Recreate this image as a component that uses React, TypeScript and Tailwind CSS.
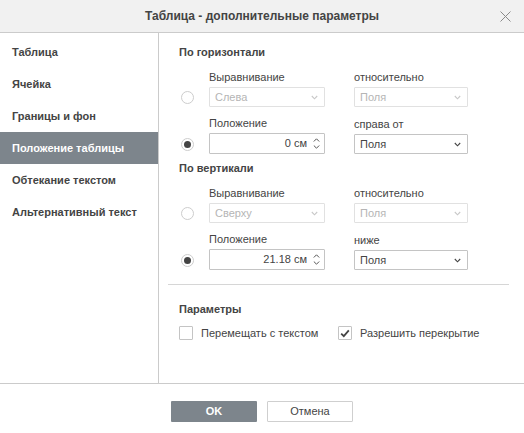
import React from 'react';

const font = { fontFamily: '"Liberation Sans", Arial, sans-serif' };

const navItems = [
  'Таблица',
  'Ячейка',
  'Границы и фон',
  'Положение таблицы',
  'Обтекание текстом',
  'Альтернативный текст',
];

const Chevron: React.FC<{ disabled?: boolean }> = ({ disabled }) => (
  <svg width="7" height="5" viewBox="0 0 7 5" className="shrink-0">
    <path d="M0.8 1 L3.5 3.8 L6.2 1" fill="none" stroke={disabled ? '#c8c8c8' : '#444'} strokeWidth="1.1" />
  </svg>
);

const Select: React.FC<{ value: string; disabled?: boolean; width: string }> = ({ value, disabled, width }) => (
  <div
    className={`${width} h-[20px] flex items-center justify-between pl-[5px] pr-[6px] border ${
      disabled ? 'border-[#e1e1e1] text-[#b5b5b5]' : 'border-[#c4c4c4] text-[#444]'
    } bg-white rounded-[1px]`}
  >
    <span>{value}</span>
    <Chevron disabled={disabled} />
  </div>
);

const Spin: React.FC<{ value: string }> = ({ value }) => (
  <div className="w-[116px] h-[21px] flex items-center justify-end pr-[4px] border border-[#c4c4c4] bg-white text-[#444] rounded-[1px]">
    <span className="mr-[6px]">{value}</span>
    <div className="flex flex-col items-center gap-[3px]">
      <svg width="7" height="4" viewBox="0 0 7 4">
        <path d="M0.8 3.5 L3.5 0.8 L6.2 3.5" fill="none" stroke="#555" strokeWidth="1" />
      </svg>
      <svg width="7" height="4" viewBox="0 0 7 4">
        <path d="M0.8 0.5 L3.5 3.2 L6.2 0.5" fill="none" stroke="#555" strokeWidth="1" />
      </svg>
    </div>
  </div>
);

const Radio: React.FC<{ checked?: boolean }> = ({ checked }) => (
  <div className="w-[13px] h-[13px] rounded-full border border-[#cdcdcd] bg-white flex items-center justify-center">
    {checked && <div className="w-[7px] h-[7px] rounded-full bg-[#444]" />}
  </div>
);

const Checkbox: React.FC<{ checked?: boolean }> = ({ checked }) => (
  <div className="w-[14px] h-[14px] border border-[#c4c4c4] bg-white rounded-[1px] flex items-center justify-center">
    {checked && (
      <svg width="10" height="9" viewBox="0 0 10 9">
        <path d="M1.2 4.6 L3.8 7.2 L8.8 1.4" fill="none" stroke="#444" strokeWidth="1.8" />
      </svg>
    )}
  </div>
);

const Row: React.FC<{
  checked?: boolean;
  label: string;
  right: string;
  children: React.ReactNode;
  rightChildren: React.ReactNode;
}> = ({ checked, label, right, children, rightChildren }) => (
  <div className="flex items-end">
    <div className="w-[30px] h-[20px] flex items-center pl-[2px]">
      <Radio checked={checked} />
    </div>
    <div className="flex flex-col w-[116px]">
      <div className="h-[14px] leading-[14px] mb-[3px] text-[#444]">{label}</div>
      {children}
    </div>
    <div className="flex flex-col ml-[29px]">
      <div className="h-[14px] leading-[14px] mb-[3px] text-[#444]">{right}</div>
      {rightChildren}
    </div>
  </div>
);

const Group: React.FC<{ title: string; align: string; pos: string; below: string }> = ({ title, align, pos, below }) => (
  <div className="flex flex-col">
    <div className="h-[14px] leading-[14px] font-bold text-[#444]">{title}</div>
    <div className="mt-[11px] flex flex-col gap-[9px]">
      <Row label="Выравнивание" right="относительно" rightChildren={<Select value="Поля" disabled width="w-[114px]" />}>
        <Select value={align} disabled width="w-[116px]" />
      </Row>
      <Row checked label="Положение" right={below} rightChildren={<Select value="Поля" width="w-[114px]" />}>
        <Spin value={pos} />
      </Row>
    </div>
  </div>
);

export default function App() {
  return (
    <div className="w-[524px] h-[433px] bg-white flex flex-col text-[11px] overflow-hidden" style={font}>
      <div className="h-[33px] shrink-0 bg-[#f1f1f1] border-b border-[#cbcbcb] relative flex items-center justify-center">
        <span className="text-[12px] font-bold text-[#444]">Таблица - дополнительные параметры</span>
        <svg width="11" height="11" viewBox="0 0 11 11" className="absolute right-[13px] top-[11px]">
          <path d="M0.5 0.5 L10.5 10.5 M10.5 0.5 L0.5 10.5" stroke="#8a8a8a" strokeWidth="1" />
        </svg>
      </div>

      <div className="h-[351px] shrink-0 flex border-b border-[#cbcbcb]">
        <div className="w-[159px] shrink-0 border-r border-[#cbcbcb] pt-[3px] flex flex-col">
          {navItems.map((item, i) => (
            <div
              key={item}
              className={`h-[32px] flex items-center pl-[12px] font-bold ${
                i === 3 ? 'bg-[#7d858c] text-white' : 'text-[#444]'
              }`}
            >
              {item}
            </div>
          ))}
        </div>

        <div className="flex-1 flex flex-col pt-[12px] pl-[20px] pr-[15px]">
          <Group title="По горизонтали" align="Слева" pos="0 см" below="справа от" />
          <div className="mt-[7px]">
            <Group title="По вертикали" align="Сверху" pos="21.18 см" below="ниже" />
          </div>
          <div className="mt-[14px] -ml-[11px] border-t border-[#d6d6d6]" />
          <div className="mt-[17px] h-[14px] leading-[14px] font-bold text-[#444]">Параметры</div>
          <div className="mt-[9px] flex items-center text-[#444]">
            <Checkbox />
            <span className="ml-[8px] w-[137px]">Перемещать с текстом</span>
            <Checkbox checked />
            <span className="ml-[8px]">Разрешить перекрытие</span>
          </div>
        </div>
      </div>

      <div className="flex-1 flex justify-center items-start pt-[17px] gap-[10px]">
        <button className="w-[86px] h-[21px] bg-[#7d858c] text-white font-bold rounded-[1px]">OK</button>
        <button className="w-[86px] h-[21px] bg-white border border-[#cfcfcf] text-[#444] rounded-[1px]">Отмена</button>
      </div>
    </div>
  );
}
